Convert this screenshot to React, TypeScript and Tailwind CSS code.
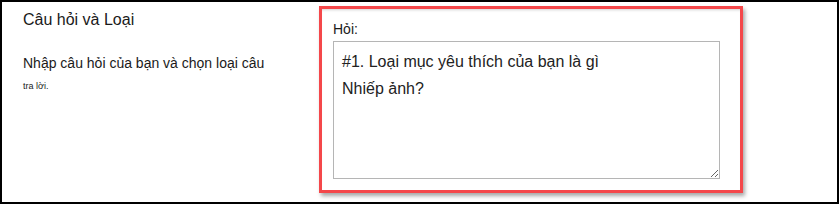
import React from 'react'

// Question editor panel: section heading on the left, highlighted question field on the right
const QUESTION_TEXT = '#1. Loại mục yêu thích của bạn là gì\nNhiếp ảnh?'

export default function App() {
  return (
    <div className="w-[839px] h-[204px] border-2 border-black bg-white flex font-['Liberation_Sans',Arial,sans-serif] text-[#1a1a1a]">
      {/* ── Section description ─────────────────────────────── */}
      <div className="w-[317px] shrink-0 pl-[21px] pt-[9px]">
        <h2 className="text-[16px] leading-[18px]">Câu hỏi và Loại</h2>
        <p className="mt-[26px] text-[14px] leading-[16px]">
          Nhập câu hỏi của bạn và chọn loại câu
        </p>
        <p className="mt-[9px] text-[9px] leading-[12px]">tra lời.</p>
      </div>

      {/* ── Highlighted question field ──────────────────────── */}
      <div className="mt-[4px] w-[424px] h-[187px] border-[3px] border-[#f4474a] shadow-[2px_3px_4px_rgba(0,0,0,0.35),inset_0_3px_3px_-2px_rgba(0,0,0,0.18)] pl-[11px] pt-[12px]">
        <label htmlFor="question" className="block text-[14px] leading-[16px]">
          Hỏi:
        </label>
        <textarea
          id="question"
          readOnly
          defaultValue={QUESTION_TEXT}
          className="mt-[4px] block w-[387px] h-[138px] border border-[#b5b5b5] bg-white px-[8px] pt-[6px] text-[16px] leading-[27px] text-[#222] outline-none"
        />
      </div>
    </div>
  )
}
